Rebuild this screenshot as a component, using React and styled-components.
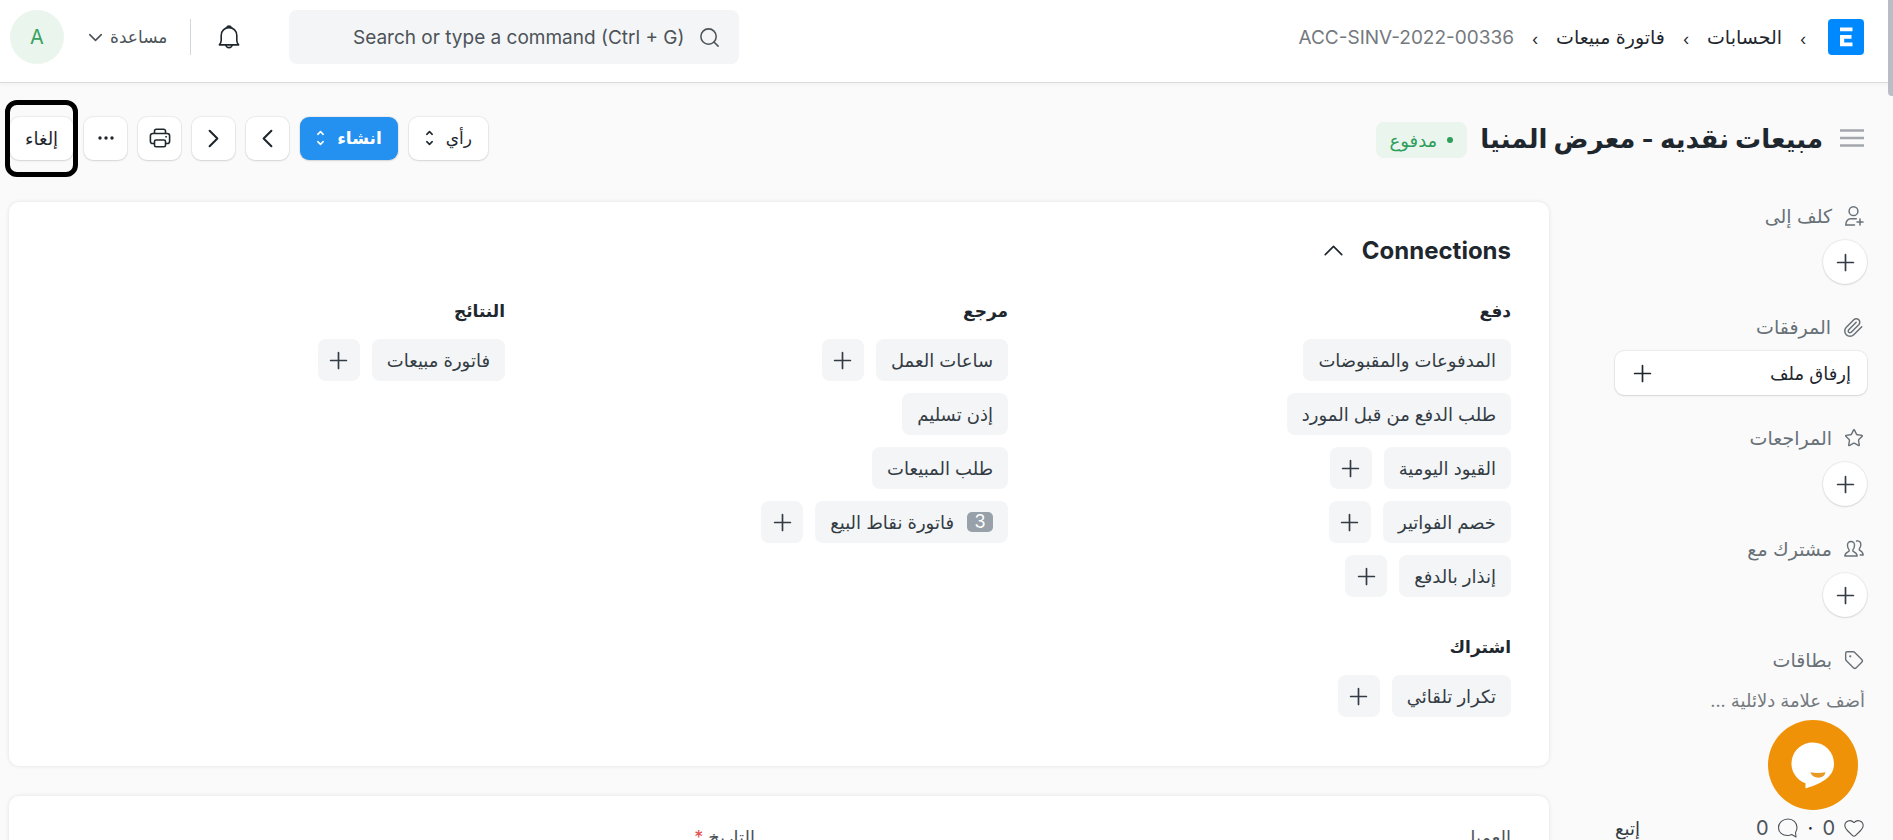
import React from 'react';
import styled, { createGlobalStyle } from 'styled-components';
import { ChevronDown, ChevronLeft, ChevronRight, ChevronUp, Heart, Plus, Search, Star, Tag } from 'lucide-react';

const connectionColumns = [
  [
    {
      title: 'دفع',
      items: [
        { label: 'المدفوعات والمقبوضات' },
        { label: 'طلب الدفع من قبل المورد' },
        { label: 'القيود اليومية', canAdd: true },
        { label: 'خصم الفواتير', canAdd: true },
        { label: 'إنذار بالدفع', canAdd: true },
      ],
    },
    {
      title: 'اشتراك',
      items: [{ label: 'تكرار تلقائي', canAdd: true }],
    },
  ],
  [
    {
      title: 'مرجع',
      items: [
        { label: 'ساعات العمل', canAdd: true },
        { label: 'إذن تسليم' },
        { label: 'طلب المبيعات' },
        { label: 'فاتورة نقاط البيع', count: 3, canAdd: true },
      ],
    },
  ],
  [
    {
      title: 'النتائج',
      items: [{ label: 'فاتورة مبيعات', canAdd: true }],
    },
  ],
];

const App = () => {
  return (
    <Page dir="rtl" lang="ar">
      <GlobalStyle />
      <Navbar>
        <Breadcrumbs>
          <LogoLink href="#home" aria-label="ERPNext">
            <LogoIcon />
          </LogoLink>
          <Separator>›</Separator>
          <Crumb href="#accounts">الحسابات</Crumb>
          <Separator>›</Separator>
          <Crumb href="#sales-invoice">فاتورة مبيعات</Crumb>
          <Separator>›</Separator>
          <CurrentCrumb>ACC-SINV-2022-00336</CurrentCrumb>
        </Breadcrumbs>
        <SearchBar>
          <Search size={23} strokeWidth={1.6} />
          <SearchInput
            dir="ltr"
            type="text"
            aria-label="Search"
            placeholder="Search or type a command (Ctrl + G)"
          />
        </SearchBar>
        <NavTools>
          <NavButton type="button" aria-label="الإشعارات">
            <BellIcon />
          </NavButton>
          <Divider />
          <HelpButton type="button">
            مساعدة
            <ChevronDown size={23} strokeWidth={1.6} />
          </HelpButton>
          <Avatar type="button">A</Avatar>
        </NavTools>
      </Navbar>

      <PageHead>
        <TitleArea>
          <MenuButton type="button" aria-label="القائمة">
            <MenuIcon />
          </MenuButton>
          <Title>مبيعات نقديه - معرض المنيا</Title>
          <Status>مدفوع</Status>
        </TitleArea>
        <Actions>
          <ActionButton type="button">
            رأي
            <SelectIcon />
          </ActionButton>
          <ActionButton type="button" $primary>
            انشاء
            <SelectIcon />
          </ActionButton>
          <SquareButton type="button" aria-label="السابق">
            <ChevronLeft size={31} strokeWidth={1.6} />
          </SquareButton>
          <SquareButton type="button" aria-label="التالي">
            <ChevronRight size={31} strokeWidth={1.6} />
          </SquareButton>
          <SquareButton type="button" aria-label="طباعة">
            <PrinterIcon />
          </SquareButton>
          <SquareButton type="button" aria-label="المزيد">
            <DotsIcon />
          </SquareButton>
          <Highlight>
            <CancelButton type="button">إلغاء</CancelButton>
          </Highlight>
        </Actions>
      </PageHead>

      <Layout>
        <Sidebar>
          <SideSection>
            <SideLabel>
              <AssignIcon />
              كلف إلى
            </SideLabel>
            <RoundButton type="button" aria-label="كلف إلى">
              <PlusIcon />
            </RoundButton>
          </SideSection>
          <SideSection>
            <SideLabel>
              <ClipIcon />
              المرفقات
            </SideLabel>
            <AttachButton type="button">
              إرفاق ملف
              <PlusIcon />
            </AttachButton>
          </SideSection>
          <SideSection>
            <SideLabel>
              <Star size={20} strokeWidth={1.7} />
              المراجعات
            </SideLabel>
            <RoundButton type="button" aria-label="المراجعات">
              <PlusIcon />
            </RoundButton>
          </SideSection>
          <SideSection>
            <SideLabel>
              <UsersIcon />
              مشترك مع
            </SideLabel>
            <RoundButton type="button" aria-label="مشترك مع">
              <PlusIcon />
            </RoundButton>
          </SideSection>
          <SideSection>
            <SideLabel>
              <Tag size={20} strokeWidth={1.7} />
              بطاقات
            </SideLabel>
            <TagInput type="text" aria-label="بطاقات" placeholder="أضف علامة دلائلية ..." />
          </SideSection>
          <SideStats>
            <Stat type="button" aria-label="إعجاب">
              <Heart size={22} strokeWidth={1.2} />
              0
            </Stat>
            <span>·</span>
            <Stat type="button" aria-label="تعليقات">
              <CommentIcon />
              0
            </Stat>
            <Follow href="#follow">إتبع</Follow>
          </SideStats>
        </Sidebar>

        <Main>
          <Card>
            <CardTitle>
              Connections
              <ChevronUp size={33} strokeWidth={1.2} />
            </CardTitle>
            <ConnectionsGrid>
              {connectionColumns.map((groups) => (
                <ConnectionColumn key={groups[0].title}>
                  {groups.map((group) => (
                    <div key={group.title}>
                      <GroupTitle>{group.title}</GroupTitle>
                      <LinkList>
                        {group.items.map((item) => (
                          <LinkRow key={item.label}>
                            <LinkPill href="#list">
                              {item.count && <Count>{item.count}</Count>}
                              {item.label}
                            </LinkPill>
                            {item.canAdd && (
                              <AddButton type="button" aria-label={item.label}>
                                <PlusIcon />
                              </AddButton>
                            )}
                          </LinkRow>
                        ))}
                      </LinkList>
                    </div>
                  ))}
                </ConnectionColumn>
              ))}
            </ConnectionsGrid>
          </Card>
          <Card>
            <FieldsGrid>
              <Field>
                <label htmlFor="customer">العميل</label>
                <FieldInput id="customer" type="text" />
              </Field>
              <Field>
                <label htmlFor="date">
                  التاريخ <Required>*</Required>
                </label>
                <FieldInput id="date" type="text" />
              </Field>
            </FieldsGrid>
          </Card>
        </Main>
      </Layout>

      <ChatButton type="button" aria-label="محادثة">
        <ChatIcon />
      </ChatButton>
      <ScrollThumb />
    </Page>
  );
};

const PlusIcon = () => <Plus size={27} strokeWidth={1.5} />;

const LogoIcon = () => (
  <svg width="36" height="36" viewBox="0 0 36 36">
    <rect width="36" height="36" rx="4" fill="#0089ff" />
    <path d="M12 8.5h12.5v3.8H12zM12 16h11.5v3.8h-7.3v3.6h8.3v3.8H12z" fill="#fff" />
  </svg>
);

const BellIcon = () => (
  <svg width="22" height="25" viewBox="0 0 22 25" fill="none" stroke="currentColor" strokeWidth="1.6" strokeLinecap="round" strokeLinejoin="round">
    <path d="M8.7 2.8a2.4 2.4 0 0 1 4.6 0M11 2.6c-4.5 0-7.8 3.3-7.8 7.8v5.2c0 1.6-.6 3-1.8 4.3h19.2c-1.2-1.3-1.8-2.7-1.8-4.3v-5.2c0-4.5-3.3-7.8-7.8-7.8z" />
    <path d="M7.8 20.1a3.3 3.3 0 0 0 6.4 0" />
  </svg>
);

const MenuIcon = () => (
  <svg width="24" height="20" viewBox="0 0 24 20" stroke="#a3a7ac" strokeWidth="2.4">
    <path d="M0 2.5h24M0 10h24M0 17.5h24" />
  </svg>
);

const SelectIcon = () => (
  <svg width="9" height="16" viewBox="0 0 9 16" fill="none" stroke="currentColor" strokeWidth="1.6" strokeLinecap="round" strokeLinejoin="round">
    <path d="M1.8 4.3l2.7-2.6 2.7 2.6M1.8 11.7l2.7 2.6 2.7-2.6" />
  </svg>
);

const PrinterIcon = () => (
  <svg width="22" height="20" viewBox="0 0 22 20" fill="none" stroke="currentColor" strokeWidth="1.6" strokeLinejoin="round">
    <path d="M5.5 5.5V3a1.8 1.8 0 0 1 1.8-1.8h7.4A1.8 1.8 0 0 1 16.5 3v2.5" />
    <path d="M5.5 15.5H3.7a2.3 2.3 0 0 1-2.3-2.3V7.8a2.3 2.3 0 0 1 2.3-2.3h14.6a2.3 2.3 0 0 1 2.3 2.3v5.4a2.3 2.3 0 0 1-2.3 2.3h-1.8" />
    <rect x="5.5" y="12" width="11" height="6.8" rx="1.6" />
    <path d="M16.3 8.7h1.6" />
  </svg>
);

const DotsIcon = () => (
  <svg width="16" height="4" viewBox="0 0 16 4" fill="currentColor">
    <circle cx="2" cy="2" r="1.7" />
    <circle cx="8" cy="2" r="1.7" />
    <circle cx="14" cy="2" r="1.7" />
  </svg>
);

const AssignIcon = () => (
  <svg width="20" height="22" viewBox="0 0 20 22" fill="none" stroke="currentColor" strokeWidth="1.5" strokeLinecap="round">
    <circle cx="9.5" cy="6.2" r="4.4" />
    <path d="M10.5 20H1.8c0-3.8 2-6.3 5-6.3h5.5M16 14v6M13 17h6" />
  </svg>
);

const ClipIcon = () => (
  <svg width="21" height="21" viewBox="0 0 24 24" fill="none" stroke="currentColor" strokeWidth="1.7" strokeLinecap="round" strokeLinejoin="round">
    <path d="m21.44 11.05-9.19 9.19a6 6 0 0 1-8.49-8.49l8.57-8.57A4 4 0 1 1 18 8.84l-8.59 8.57a2 2 0 0 1-2.83-2.83l8.49-8.48" />
  </svg>
);

const UsersIcon = () => (
  <svg width="20" height="18" viewBox="0 0 20 18" fill="none" stroke="currentColor" strokeWidth="1.4" strokeLinecap="round" strokeLinejoin="round">
    <path d="M7 1.5c-2.4 0-3.7 1.7-3.5 4 .1 1.9.7 3.3 1.6 4.2v1.5c-1.8.9-4 1.4-4.3 4.8h12.4c-.3-3.4-2.5-3.9-4.3-4.8V9.7c.9-.9 1.5-2.3 1.6-4.2.2-2.3-1.1-4-3.5-4z" />
    <path d="M12.5 1c2.7-.5 4.6 1 4.3 4-.1 1.6-.6 2.8-1.4 3.6v1.6c1.8.8 3.5 1.6 3.8 4.8h-3" />
  </svg>
);

const CommentIcon = () => (
  <svg width="22" height="20" viewBox="0 0 22 20" fill="none" stroke="currentColor" strokeWidth="1.1" strokeLinejoin="round">
    <path d="M18.500 14.500c1-1.500 1.500-3 1.500-5C20 4.500 16 1 11 1S1.500 4.500 1.500 9.500 5.500 17.500 10.500 17.500c1.500 0 3-.3 4.200-.9l4.300 2.400z" />
  </svg>
);

const ChatIcon = () => (
  <svg width="90" height="90" viewBox="0 0 90 90">
    <circle cx="45" cy="45" r="45" fill="#f09208" />
    <path d="M45 22.500a21 21 0 0 1 21 21c0 12-9 19-28.500 25v-5.200A21 21 0 0 1 45 22.500z" fill="#fff" />
    <path d="M42.500 52.300c4.500 1 10 1 15 0-.5 3.500-3.500 5.400-7 5.400-4 0-7-2-8-5.400z" fill="#e89a25" />
  </svg>
);

const GlobalStyle = createGlobalStyle`
  * {
    box-sizing: border-box;
  }

  body {
    margin: 0;
    background: #fafafa;
  }

  button,
  input {
    font-family: inherit;
  }
`;

const Page = styled.div`
  position: relative;
  height: 100vh;
  overflow: hidden;
  background: #fafafa;
  color: #1f272e;
  font-family: Inter, 'DejaVu Sans', sans-serif;
  font-size: 16px;

  svg {
    flex: none;
    display: block;
  }

  button {
    cursor: pointer;
  }
`;

const Navbar = styled.header`
  display: flex;
  align-items: center;
  height: 83px;
  padding: 0 29px 8px 10px;
  background: #fff;
  border-bottom: 1px solid #d9dcde;
  box-shadow: 0 2px 3px rgba(0, 0, 0, 0.03);
`;

const Breadcrumbs = styled.nav`
  display: flex;
  align-items: center;
  flex: 1;
`;

const LogoLink = styled.a`
  display: block;
  margin-left: 4px;
`;

const Separator = styled.span`
  width: 42px;
  padding-top: 4px;
  text-align: center;
  font-size: 16px;
`;

const Crumb = styled.a`
  color: #1f272e;
  font-size: 19px;
  text-decoration: none;
`;

const CurrentCrumb = styled.span`
  color: #74797e;
  font-size: 19px;
`;

const SearchBar = styled.div`
  display: flex;
  align-items: center;
  gap: 12px;
  width: 450px;
  height: 54px;
  padding: 0 18px;
  background: #f4f5f6;
  border-radius: 8px;
  color: #4c5359;
`;

const SearchInput = styled.input`
  flex: 1;
  min-width: 0;
  border: none;
  outline: none;
  background: transparent;
  font-size: 19px;
  text-align: right;

  &::placeholder {
    color: #4c5359;
  }
`;

const NavTools = styled.div`
  display: flex;
  align-items: center;
  padding-right: 49px;
`;

const NavButton = styled.button`
  padding: 0;
  border: none;
  background: none;
  color: #1f272e;
`;

const Divider = styled.div`
  width: 1px;
  height: 36px;
  margin: 0 27px 0 23px;
  background: #d1d8dd;
`;

const HelpButton = styled.button`
  display: flex;
  align-items: center;
  gap: 3px;
  padding: 0;
  border: none;
  background: none;
  color: #4c5359;
  font-size: 17px;
`;

const Avatar = styled.button`
  width: 54px;
  height: 54px;
  margin-right: 20px;
  padding: 0;
  border: none;
  border-radius: 50%;
  background: #eaf5ee;
  color: #38a160;
  font-size: 20px;
`;

const PageHead = styled.div`
  display: flex;
  align-items: center;
  justify-content: space-between;
  height: 110px;
  padding: 0 29px 0 10px;
`;

const TitleArea = styled.div`
  display: flex;
  align-items: center;
`;

const MenuButton = styled.button`
  margin-left: 17px;
  padding: 0;
  border: none;
  background: none;
`;

const Title = styled.h1`
  margin: 0;
  font-size: 26px;
  font-weight: 700;
`;

const Status = styled.span`
  display: flex;
  align-items: center;
  gap: 10px;
  height: 36px;
  margin: 4px 13px 0 0;
  padding: 0 14px;
  border-radius: 8px;
  background: #eaf5ee;
  color: #2f9e5b;
  font-size: 18px;

  &::before {
    content: '';
    width: 6px;
    height: 6px;
    border-radius: 50%;
    background: #2f9e5b;
  }
`;

const Actions = styled.div`
  display: flex;
  align-items: center;
  gap: 11px;
`;

const ActionButton = styled.button`
  display: flex;
  align-items: center;
  justify-content: center;
  gap: 12px;
  height: 43px;
  padding: 0 16px;
  border: none;
  border-radius: 9px;
  background: ${(props) => (props.$primary ? '#2490ef' : '#fff')};
  color: ${(props) => (props.$primary ? '#fff' : '#1f272e')};
  font-size: 17px;
  font-weight: ${(props) => (props.$primary ? 700 : 400)};
  box-shadow: 0 0 1px 1px rgba(0, 0, 0, 0.06), 0 1px 2px rgba(0, 0, 0, 0.1);
`;

const SquareButton = styled(ActionButton)`
  width: 43px;
  padding: 0;
`;

const CancelButton = styled(ActionButton)`
  padding: 0 15px;
  font-size: 18px;
`;

const Highlight = styled.div`
  position: relative;

  &::after {
    content: '';
    position: absolute;
    inset: -17px -5px;
    border: 5px solid #000;
    border-radius: 12px;
    pointer-events: none;
  }
`;

const Layout = styled.div`
  display: flex;
  align-items: flex-start;
  gap: 66px;
  padding: 9px 26px 0 9px;
`;

const Sidebar = styled.aside`
  flex: none;
  width: 252px;
`;

const SideSection = styled.section`
  height: 111px;
`;

const SideLabel = styled.div`
  display: flex;
  align-items: center;
  gap: 12px;
  height: 28px;
  margin-bottom: 10px;
  padding-right: 3px;
  color: #687178;
  font-size: 19px;
`;

const RoundButton = styled.button`
  display: flex;
  align-items: center;
  justify-content: center;
  width: 44px;
  height: 44px;
  padding: 0;
  border: none;
  border-radius: 50%;
  background: #fff;
  color: #333c44;
  box-shadow: 0 0 1px 1px rgba(0, 0, 0, 0.06), 0 1px 2px rgba(0, 0, 0, 0.1);
`;

const AttachButton = styled(RoundButton)`
  justify-content: space-between;
  width: 100%;
  padding: 0 16px 0 14px;
  border-radius: 9px;
  color: #1f272e;
  font-size: 18px;
`;

const TagInput = styled.input`
  width: 100%;
  height: 32px;
  padding: 0 2px;
  border: none;
  outline: none;
  background: transparent;
  font-size: 18px;

  &::placeholder {
    color: #74797e;
  }
`;

const SideStats = styled.div`
  display: flex;
  align-items: center;
  gap: 9px;
  height: 28px;
  margin-top: 57px;
  padding-right: 2px;
  font-size: 20px;
`;

const Stat = styled.button`
  display: flex;
  align-items: center;
  gap: 8px;
  padding: 0;
  border: none;
  background: none;
  color: #4c5359;
  font-size: 20px;
`;

const Follow = styled.a`
  margin-right: auto;
  color: #333c44;
  font-size: 18px;
  text-decoration: none;
`;

const Main = styled.main`
  display: flex;
  flex: 1;
  flex-direction: column;
  gap: 30px;
  min-width: 0;
`;

const Card = styled.section`
  padding: 28px 38px 49px;
  border-radius: 10px;
  background: #fff;
  box-shadow: 0 0 4px rgba(0, 0, 0, 0.1);
`;

const CardTitle = styled.h2`
  display: flex;
  align-items: center;
  gap: 12px;
  height: 40px;
  margin: 0 0 26px;
  font-size: 24px;
  font-weight: 700;
`;

const ConnectionsGrid = styled.div`
  display: grid;
  grid-template-columns: repeat(3, 1fr);
  gap: 45px;
`;

const ConnectionColumn = styled.div`
  display: flex;
  flex-direction: column;
  gap: 35px;
`;

const GroupTitle = styled.h3`
  height: 30px;
  margin: 0 0 13px;
  font-size: 17px;
  font-weight: 700;
  line-height: 30px;
`;

const LinkList = styled.div`
  display: flex;
  flex-direction: column;
  gap: 12px;
`;

const LinkRow = styled.div`
  display: flex;
  gap: 12px;
`;

const LinkPill = styled.a`
  display: flex;
  align-items: center;
  gap: 13px;
  height: 42px;
  padding: 0 15px;
  border-radius: 8px;
  background: #f4f5f6;
  color: #333c44;
  font-size: 18px;
  text-decoration: none;
`;

const Count = styled.span`
  width: 26px;
  height: 20px;
  border-radius: 5px;
  background: #98a1a9;
  color: #fff;
  line-height: 20px;
  text-align: center;
`;

const AddButton = styled.button`
  display: flex;
  align-items: center;
  justify-content: center;
  width: 42px;
  height: 42px;
  padding: 0;
  border: none;
  border-radius: 8px;
  background: #f4f5f6;
  color: #333c44;
`;

const FieldsGrid = styled.div`
  display: grid;
  grid-template-columns: repeat(2, 1fr);
  gap: 48px;
`;

const Field = styled.div`
  display: flex;
  flex-direction: column;
  gap: 8px;
  color: #4c5359;
  font-size: 18px;
  line-height: 28px;
`;

const FieldInput = styled.input`
  height: 42px;
  border: none;
  border-radius: 8px;
  background: #f4f5f6;
`;

const Required = styled.span`
  color: #e24c4c;
`;

const ChatButton = styled.button`
  position: fixed;
  right: 35px;
  bottom: 30px;
  padding: 0;
  border: none;
  border-radius: 50%;
  background: none;
`;

const ScrollThumb = styled.div`
  position: fixed;
  top: 0;
  right: 0;
  width: 5px;
  height: 96px;
  border-radius: 0 0 0 4px;
  background: #b9bec6;
`;

export default App;
